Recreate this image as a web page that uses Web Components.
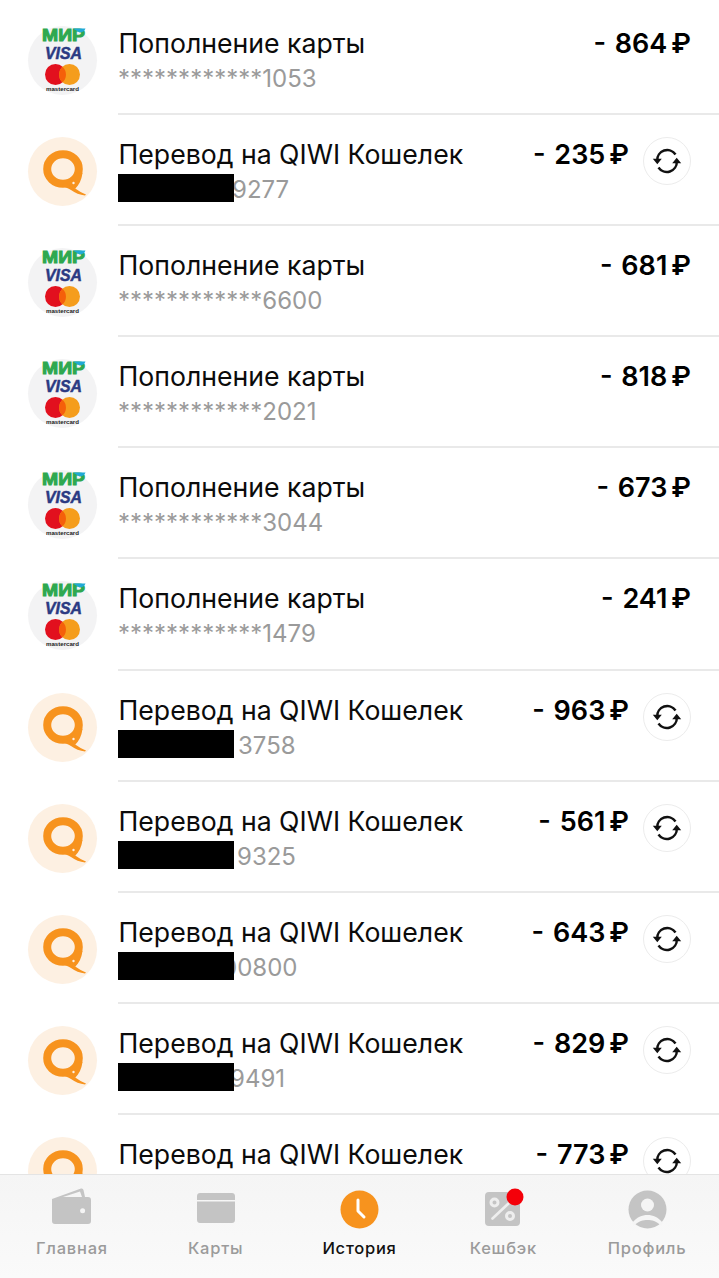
<!DOCTYPE html>
<html lang="ru"><head><meta charset="utf-8"><title>История</title>
<style>
html,body{margin:0;padding:0;background:#fff}
body{font-family:Inter,"Noto Sans",sans-serif;color:#000}
</style></head><body>
<app-screen>
  <tx-row kind="card" amount="- 864">************1053</tx-row>
  <tx-row kind="qiwi" amount="- 235" mask="114">9277</tx-row>
  <tx-row kind="card" amount="- 681">************6600</tx-row>
  <tx-row kind="card" amount="- 818">************2021</tx-row>
  <tx-row kind="card" amount="- 673">************3044</tx-row>
  <tx-row kind="card" amount="- 241">************1479</tx-row>
  <tx-row kind="qiwi" amount="- 963" mask="120">3758</tx-row>
  <tx-row kind="qiwi" amount="- 561" mask="119">9325</tx-row>
  <tx-row kind="qiwi" amount="- 643" mask="104">00800</tx-row>
  <tx-row kind="qiwi" amount="- 829" mask="112">9491</tx-row>
  <tx-row kind="qiwi" amount="- 773"></tx-row>
  <tab-bar slot="bar"></tab-bar>
</app-screen>
<script>
class AppScreen extends HTMLElement{constructor(){super();this.attachShadow({mode:'open'}).innerHTML=`<style>
:host{display:block;position:relative;width:719px;height:1278px;overflow:hidden;background:#fff}
.list{display:flex;flex-direction:column;padding-top:4px}
.bar{position:absolute;left:0;right:0;bottom:0}
</style><div class="list"><slot></slot></div><div class="bar"><slot name="bar"></slot></div>`}}
customElements.define('app-screen',AppScreen);

class CardLogos extends HTMLElement{constructor(){super();this.attachShadow({mode:'open'}).innerHTML=`<style>
:host{display:block;width:69px;height:69px;border-radius:50%;background:#f3f3f4;flex:none}svg{display:block;overflow:visible}
text{font-family:"Liberation Sans",sans-serif}
</style><svg width="69" height="69" viewBox="0 0 69 69">
<text x="14" y="15" font-size="17" font-weight="700" fill="#2fa84f" stroke="#2fa84f" stroke-width="1" textLength="43" lengthAdjust="spacingAndGlyphs">МИР</text>
<path d="M45 2.500h12.500c-1 2.500-3 4-6 4z" fill="#20a9d6"/>
<text x="17" y="33" font-size="17" font-weight="700" font-style="italic" fill="#2b3a82" stroke="#2b3a82" stroke-width=".5" textLength="37" lengthAdjust="spacingAndGlyphs">VISA</text>
<circle cx="27.500" cy="48.500" r="10.500" fill="#e2101e"/><circle cx="41.500" cy="48.500" r="10.500" fill="#f59d1c"/>
<path d="M34.500 40.700a10.500 10.500 0 0 1 0 15.600a10.500 10.500 0 0 1 0-15.600z" fill="#f5600a"/>
<text x="18" y="64.500" font-size="5.500" font-weight="700" fill="#222" textLength="33" lengthAdjust="spacingAndGlyphs">mastercard</text>
</svg>`}}
customElements.define('card-logos',CardLogos);

class QiwiLogo extends HTMLElement{constructor(){super();this.attachShadow({mode:'open'}).innerHTML=`<style>
:host{display:block;width:69px;height:69px;border-radius:50%;background:#fdf0e2;flex:none}svg{display:block}
</style><svg width="69" height="69" viewBox="0 0 69 69">
<ellipse cx="35" cy="32" rx="15.800" ry="14.800" fill="none" stroke="#f7931e" stroke-width="8"/>
<path d="M36 46C42 47.500 45 50 48 52c3 2 6 4 10 5.500l-1 1C52 58 47 56 43 53c-3-2-6-3-9-4z" fill="#f7931e"/>
<path d="M54.500 36C53.500 43 51 48 47 52 44 50 41 48 38.500 46 43 44.500 46 41 47.500 37z" fill="#f7931e"/>
<circle cx="45.500" cy="46" r="1.200" fill="#fdf0e2"/>
</svg>`}}
customElements.define('qiwi-logo',QiwiLogo);

class RepeatButton extends HTMLElement{constructor(){super();this.attachShadow({mode:'open'}).innerHTML=`<style>
:host{display:flex;align-items:center;justify-content:center;width:48px;height:48px;box-sizing:border-box;border:1.500px solid #ececec;border-radius:50%;background:#fff;flex:none}svg{display:block}
</style><svg width="30" height="26" viewBox="0 0 30 26" fill="none">
<path d="M5.200 12.500A10 10 0 0 1 23.500 6.500M24.800 13.500A10 10 0 0 1 6.500 19.500" stroke="#111" stroke-width="2.500"/>
<path d="M.8 10.800h9l-4.500 5.400zM20.200 15.200h9l-4.500-5.400z" fill="#111"/></svg>`}}
customElements.define('repeat-button',RepeatButton);

class TxRow extends HTMLElement{constructor(){super();
const kind=this.getAttribute('kind'),amount=this.getAttribute('amount'),mask=this.getAttribute('mask');
const title=kind==='qiwi'?'Перевод на QIWI Кошелек':'Пополнение карты';
this.attachShadow({mode:'open'}).innerHTML=`<style>
:host{display:flex;height:111.100px;flex:none;box-sizing:border-box;padding-left:28px}
.ava{padding-top:22px}
.main{flex:1;margin-left:21px;display:flex;border-bottom:2px solid #e9e9e9;padding-right:28px;min-width:0}
.txt{flex:1;min-width:0;padding-top:22px}
.t{font-size:26.650px;line-height:35px;color:#0b0b0b;margin-left:.5px;white-space:nowrap}
.s{position:relative;box-sizing:border-box;font-size:24px;line-height:34px;color:#9a9a9a;white-space:nowrap;height:34px;padding-top:1px;padding-left:${mask?mask:0}px}
.m{position:absolute;left:0;top:2px;width:116px;height:28px;background:#000}
.amt{font-size:27px;font-weight:600;line-height:34px;padding-top:23px;white-space:nowrap;color:#000;word-spacing:2px}
.r{margin-left:4px}
repeat-button{margin:22px 0 0 14px}
</style><div class="ava">${kind==='qiwi'?'<qiwi-logo></qiwi-logo>':'<card-logos></card-logos>'}</div>
<div class="main"><div class="txt"><div class="t">${title}</div><div class="s">${mask?'<span class="m"></span>':''}<slot></slot></div></div>
<div class="amt">${amount}<span class="r">₽</span></div>${kind==='qiwi'?'<repeat-button></repeat-button>':''}</div>`}}
customElements.define('tx-row',TxRow);

class TabItem extends HTMLElement{constructor(){super();this.attachShadow({mode:'open'}).innerHTML=`<style>
:host{display:flex;flex-direction:column;align-items:center;flex:1 1 0;padding-top:13px}
.i{position:relative;height:42px;display:flex;align-items:center;justify-content:center}
.l{margin-top:8px;font-size:16.500px;line-height:20px;font-weight:500;letter-spacing:.75px;color:#9b9b9b;white-space:nowrap}
:host([active]) .l{color:#111}
</style><div class="i"><slot name="icon"></slot></div><div class="l"><slot></slot></div>`}}
customElements.define('tab-item',TabItem);

class TabBar extends HTMLElement{constructor(){super();this.attachShadow({mode:'open'}).innerHTML=`<style>
:host{display:flex;height:104px;box-sizing:border-box;background:linear-gradient(#f5f5f5,#fafafa);border-top:1px solid #e4e4e4}
svg{display:block}
</style>
<tab-item><svg slot="icon" width="39" height="36" viewBox="0 0 39 36" style="margin-bottom:6px"><path d="M0 11 29 .5Q31 0 31.500 2L33 9h3q3 0 3 3v21q0 3-3 3H3q-3 0-3-3z" fill="#c4c4c4"/><path d="M11 9 28 3.500 30 9z" fill="#f5f5f5"/><circle cx="30.600" cy="22.700" r="2.500" fill="#f5f5f5"/></svg>Главная</tab-item>
<tab-item><svg slot="icon" width="38" height="30" viewBox="0 0 38 30" style="margin-bottom:2px"><path d="M3 0h32c1.700 0 3 1.300 3 3v4H0V3c0-1.700 1.300-3 3-3zM0 8.500h38V27c0 1.700-1.300 3-3 3H3c-1.700 0-3-1.300-3-3z" fill="#c4c4c4"/></svg>Карты</tab-item>
<tab-item active><svg slot="icon" width="39" height="39" viewBox="0 0 39 39"><circle cx="19.500" cy="19.500" r="19" fill="#f7931e"/><path d="M18 10V21L24 27" fill="none" stroke="#fff" stroke-width="3" stroke-linecap="round" stroke-linejoin="round"/></svg>История</tab-item>
<tab-item><svg slot="icon" width="44" height="42" viewBox="0 0 44 42"><rect x="4" y="4" width="35" height="34" rx="4" fill="#c4c4c4"/><circle cx="13.500" cy="14.500" r="3.500" fill="none" stroke="#eee" stroke-width="3"/><circle cx="29" cy="28" r="3.500" fill="none" stroke="#eee" stroke-width="3"/><path d="M11.500 30.500 28 15" stroke="#eee" stroke-width="2.600" stroke-linecap="round"/><circle cx="34" cy="9" r="8.500" fill="#f40009"/></svg>Кешбэк</tab-item>
<tab-item><svg slot="icon" width="39" height="39" viewBox="0 0 39 39"><circle cx="19.500" cy="19.500" r="19" fill="#c4c4c4"/><circle cx="19.500" cy="15" r="6.500" fill="#f5f5f5"/><path d="M4 33C9 27 14 25 19.500 25S30 27 35 33l-2 2.500C28 31 24 30 19.500 30S11 31 6 35.500z" fill="#f5f5f5"/></svg>Профиль</tab-item>`}}
customElements.define('tab-bar',TabBar);
</script>
</body></html>
